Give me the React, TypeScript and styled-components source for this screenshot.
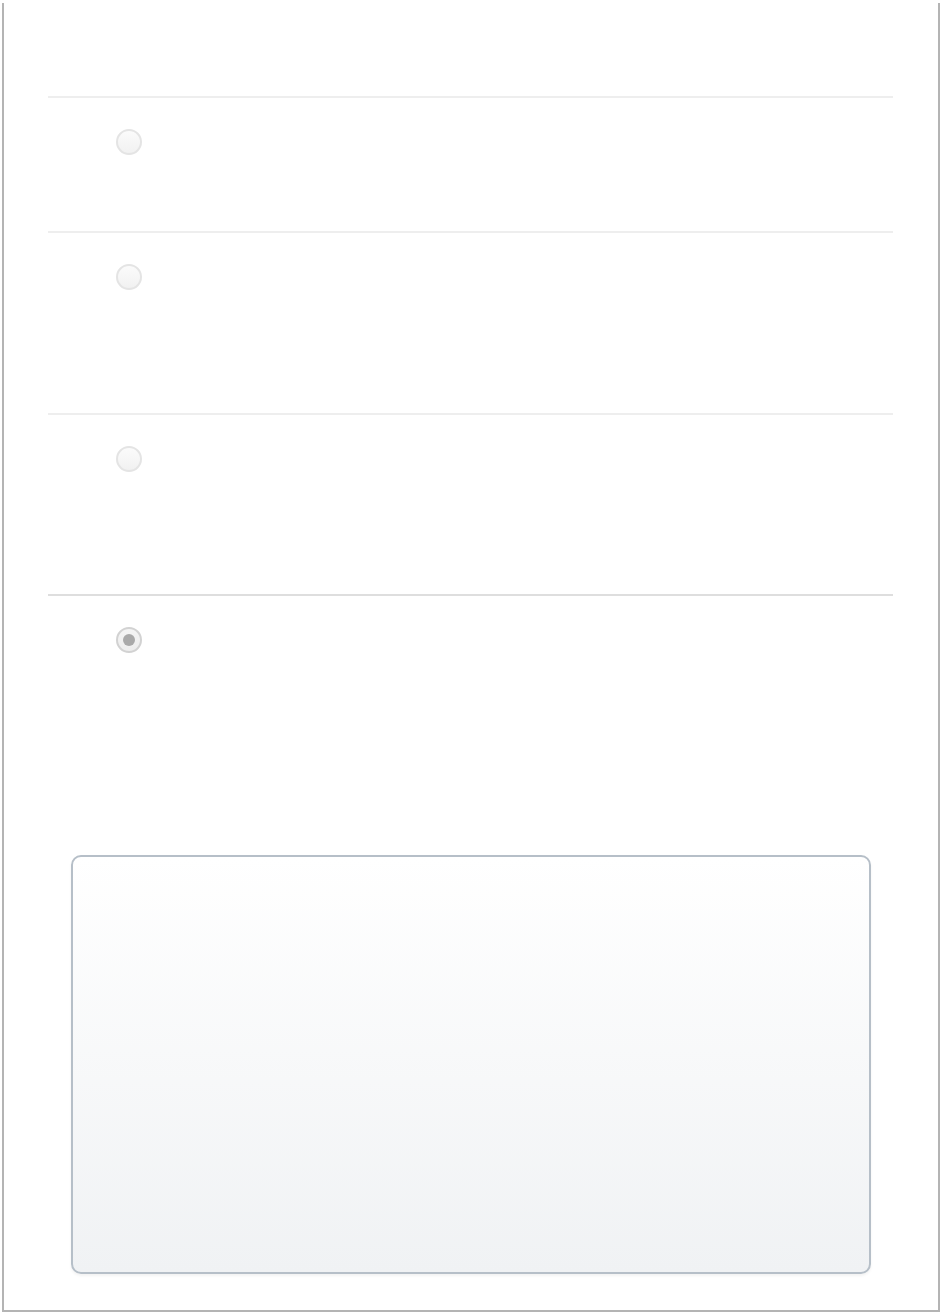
import styled, { createGlobalStyle } from "styled-components";

const GlobalStyle = createGlobalStyle`
  html, body {
    margin: 0;
    padding: 0;
    background: #ffffff;
    font-family: "Liberation Sans", Arial, sans-serif;
  }
`;

const rows = [
  { height: 135, selected: false },
  { height: 182, selected: false },
  { height: 181, selected: false },
  { height: 261, selected: true },
];

const App = () => {
  return (
    <>
      <GlobalStyle />
      <FrameStyle>
        <ListStyle>
          {rows.map((row, i) => (
            <RowStyle key={i} $height={row.height} $last={i === rows.length - 1}>
              <RadioStyle $selected={row.selected}>
                {row.selected && <RadioDotStyle />}
              </RadioStyle>
            </RowStyle>
          ))}
        </ListStyle>
        <PanelStyle />
      </FrameStyle>
    </>
  );
};

const FrameStyle = styled.div`
  box-sizing: border-box;
  margin: 3px 0 0 2px;
  width: 938px;
  height: 1309px;
  border: 2px solid #b4b4b4;
  border-top: none;
  padding: 93px 45px 36px 44px;
  background: #ffffff;
`;

const ListStyle = styled.div`
  display: flex;
  flex-direction: column;
`;

const RowStyle = styled.div<{ $height: number; $last: boolean }>`
  box-sizing: border-box;
  height: ${({ $height }) => $height}px;
  border-top: 2px solid ${({ $last }) => ($last ? "#dedede" : "#eeeeee")};
  padding: 31px 0 0 68px;
`;

const RadioStyle = styled.div<{ $selected: boolean }>`
  box-sizing: border-box;
  width: 26px;
  height: 26px;
  border-radius: 50%;
  border: 2px solid ${({ $selected }) => ($selected ? "#d2d2d2" : "#e4e4e4")};
  background: ${({ $selected }) =>
    $selected
      ? "linear-gradient(#f4f4f4, #ededed)"
      : "linear-gradient(#fbfbfb, #f1f1f1)"};
  display: flex;
  align-items: center;
  justify-content: center;
`;

const RadioDotStyle = styled.span`
  width: 12px;
  height: 12px;
  border-radius: 50%;
  background: #a9a9a9;
`;

const PanelStyle = styled.div`
  box-sizing: border-box;
  margin-left: 23px;
  width: 800px;
  height: 419px;
  border: 2px solid #b6bfc8;
  border-radius: 10px;
  background: linear-gradient(#ffffff, #f0f2f4);
  box-shadow: 0 2px 3px rgba(0, 0, 0, 0.05);
`;

export default App;
